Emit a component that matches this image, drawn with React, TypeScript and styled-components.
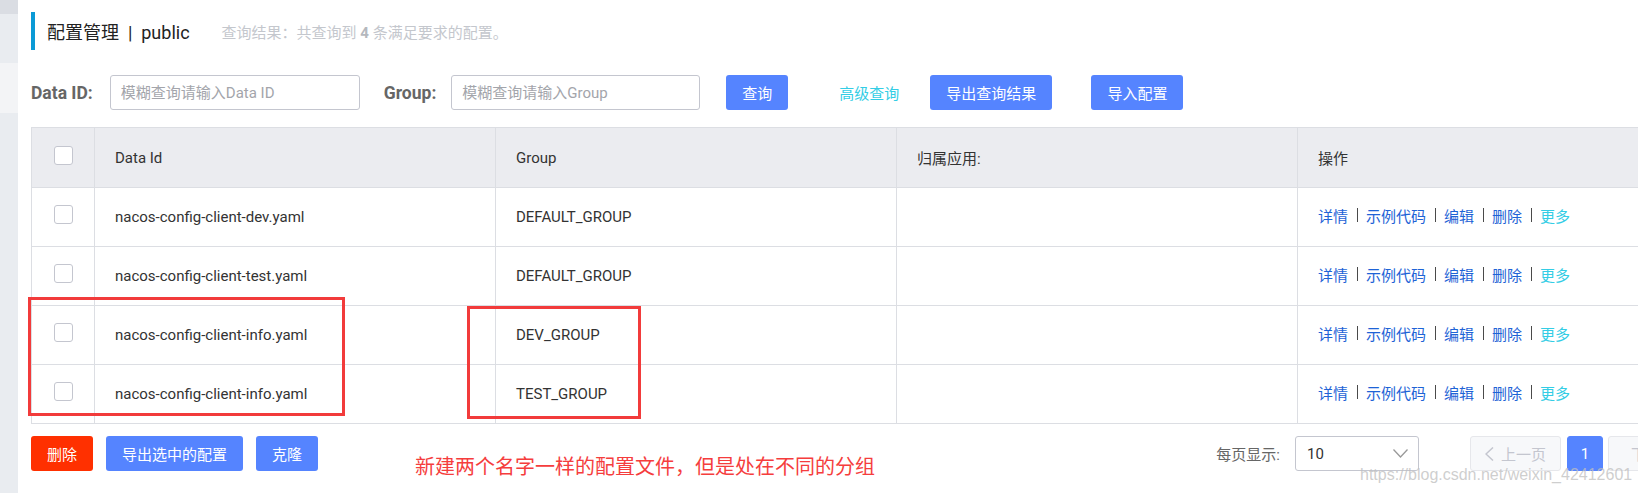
import React from 'react'
import styled, { createGlobalStyle } from 'styled-components'

const GlobalStyle = createGlobalStyle`
  html, body {
    margin: 0;
    padding: 0;
    background: #fff;
    overflow: hidden;
  }
  body {
    font-family: Roboto, "Noto Sans CJK SC", sans-serif;
    font-size: 15px;
    color: #333;
  }
  * {
    box-sizing: border-box;
  }
`

const Page = styled.div`
  position: relative;
  display: flex;
  width: 1638px;
  height: 493px;
  overflow: hidden;
`

const Sidebar = styled.div`
  flex: none;
  width: 18px;
  display: flex;
  flex-direction: column;
  background: #e9ecf0;
`

const SideBlock = styled.div<{ h: number; tone: string }>`
  height: ${({ h }) => h}px;
  background: ${({ tone }) => tone};
`

const Main = styled.div`
  flex: none;
  width: 1668px;
  margin-left: 13px;
  padding-top: 12px;
`

const TitleBar = styled.div`
  display: flex;
  align-items: center;
  height: 38px;
  border-left: 4px solid #0b9ad6;
  padding-left: 12px;
`

const Title = styled.h1`
  margin: 0;
  font-size: 18px;
  font-weight: 400;
  color: #222;
`

const Summary = styled.span`
  margin-left: 32px;
  font-size: 15px;
  color: #c4c7cd;

  strong {
    font-weight: 700;
    color: #b5b8be;
  }
`

const SearchBar = styled.div`
  display: flex;
  align-items: center;
  height: 35px;
  margin-top: 25px;
`

const FieldLabel = styled.label<{ gap?: number; space: number }>`
  margin-left: ${({ gap }) => gap || 0}px;
  margin-right: ${({ space }) => space}px;
  font-size: 17.5px;
  font-weight: 700;
  color: #666;
`

const SearchInput = styled.input<{ w: number }>`
  width: ${({ w }) => w}px;
  height: 35px;
  padding: 0 10px;
  border: 1px solid #c4c6cf;
  border-radius: 3px;
  font: inherit;
  color: #333;
  outline: none;

  &::placeholder {
    color: #a3a5ab;
  }
`

const Button = styled.button<{ gap?: number; danger?: boolean }>`
  height: 35px;
  margin-left: ${({ gap }) => gap || 0}px;
  padding: 0 16px;
  border: none;
  border-radius: 3px;
  background: ${({ danger }) => (danger ? '#ff3000' : '#5584ff')};
  color: #fff;
  font: inherit;
  cursor: pointer;
`

const TextButton = styled.button<{ gap?: number }>`
  height: 35px;
  margin-left: ${({ gap }) => gap || 0}px;
  padding: 0 16px;
  border: none;
  background: transparent;
  color: #33cde5;
  font: inherit;
`

const Table = styled.div`
  margin-top: 17px;
  border: 1px solid #dcdee3;
  border-bottom: none;
`

const Row = styled.div<{ head?: boolean }>`
  display: grid;
  grid-template-columns: 63px 401px 401px 401px 1fr;
  height: ${({ head }) => (head ? 60 : 59)}px;
  background: ${({ head }) => (head ? '#ebecf0' : '#fff')};
  border-bottom: 1px solid #dcdee3;
`

const Cell = styled.div<{ center?: boolean; lift?: number }>`
  display: flex;
  align-items: center;
  justify-content: ${({ center }) => (center ? 'center' : 'flex-start')};
  padding: ${({ center }) => (center ? 0 : '0 20px')};
  padding-bottom: ${({ lift }) => lift || 0}px;
  border-right: 1px solid #dcdee3;
  white-space: nowrap;
`

const Checkbox = styled.span`
  display: block;
  width: 19px;
  height: 19px;
  margin-bottom: 5px;
  border: 1px solid #c4c6cf;
  border-radius: 3px;
  background: #fff;
`

const OpLink = styled.a<{ more?: boolean }>`
  color: ${({ more }) => (more ? '#33cde5' : '#1e63d6')};
  text-decoration: none;
  cursor: pointer;
`

const OpSep = styled.span`
  width: 1px;
  height: 14px;
  margin: 0 8px 0 9px;
  background: #4a4a4a;
`

const Footer = styled.div`
  display: flex;
  align-items: center;
  justify-content: space-between;
  margin-top: 12px;
`

const ButtonGroup = styled.div`
  display: flex;
  gap: 13px;
`

const Pager = styled.div`
  display: flex;
  align-items: center;
`

const PagerLabel = styled.span`
  margin-right: 15px;
  color: #666;
`

const Select = styled.div`
  display: flex;
  align-items: center;
  justify-content: space-between;
  width: 124px;
  height: 35px;
  margin-right: 51px;
  padding: 0 10px 0 11px;
  border: 1px solid #c4c6cf;
  border-radius: 3px;
  color: #333;
`

const PageButton = styled.button<{ current?: boolean; wide?: boolean }>`
  display: flex;
  align-items: center;
  justify-content: center;
  gap: 7px;
  width: ${({ wide }) => (wide ? 91 : 36)}px;
  height: 35px;
  margin-left: ${({ current }) => (current ? 6 : 0)}px;
  margin-right: ${({ current }) => (current ? 5 : 0)}px;
  padding: 0;
  border: 1px solid ${({ current }) => (current ? '#5584ff' : '#e6e7eb')};
  border-radius: 3px;
  background: ${({ current }) => (current ? '#5584ff' : '#f7f8fa')};
  color: ${({ current }) => (current ? '#fff' : '#c4c6cf')};
  font: inherit;
`

const Mark = styled.div<{ x: number; y: number; w: number; h: number }>`
  position: absolute;
  left: ${({ x }) => x}px;
  top: ${({ y }) => y}px;
  width: ${({ w }) => w}px;
  height: ${({ h }) => h}px;
  border: 3px solid #f23b3b;
  pointer-events: none;
`

const Note = styled.div`
  position: absolute;
  left: 415px;
  top: 454px;
  font-size: 20px;
  line-height: 26px;
  color: #f53d3d;
  white-space: nowrap;
`

const Watermark = styled.div`
  position: absolute;
  left: 1360px;
  top: 464px;
  font-family: "Liberation Sans", sans-serif;
  font-size: 16px;
  line-height: 22px;
  color: rgba(190, 190, 190, 0.75);
  white-space: nowrap;
`

const rows = [
  { id: 'nacos-config-client-dev.yaml', group: 'DEFAULT_GROUP' },
  { id: 'nacos-config-client-test.yaml', group: 'DEFAULT_GROUP' },
  { id: 'nacos-config-client-info.yaml', group: 'DEV_GROUP' },
  { id: 'nacos-config-client-info.yaml', group: 'TEST_GROUP' },
]

const ops = ['详情', '示例代码', '编辑', '删除']

const Chevron = ({ dir }: { dir: 'down' | 'left' }) =>
  dir === 'down' ? (
    <svg width="15" height="9" viewBox="0 0 15 9" fill="none">
      <polyline points="0.5,0.5 7.5,8 14.5,0.5" stroke="#999" strokeWidth="1.3" />
    </svg>
  ) : (
    <svg width="9" height="14" viewBox="0 0 9 14" fill="none">
      <polyline points="8,0.5 1,7 8,13.5" stroke="#c4c6cf" strokeWidth="1.5" />
    </svg>
  )

export default function App() {
  return (
    <Page>
      <GlobalStyle />
      <Sidebar>
        <SideBlock h={14} tone="#dadde3" />
        <SideBlock h={49} tone="#e9ecf0" />
        <SideBlock h={50} tone="#f3f4f6" />
      </Sidebar>

      <Main>
        <TitleBar>
          <Title>配置管理&nbsp;&nbsp;|&nbsp;&nbsp;public</Title>
          <Summary>
            查询结果：共查询到 <strong>4</strong> 条满足要求的配置。
          </Summary>
        </TitleBar>

        <SearchBar>
          <FieldLabel space={17}>Data ID:</FieldLabel>
          <SearchInput w={250} placeholder="模糊查询请输入Data ID" />
          <FieldLabel gap={24} space={15}>
            Group:
          </FieldLabel>
          <SearchInput w={249} placeholder="模糊查询请输入Group" />
          <Button gap={26}>查询</Button>
          <TextButton gap={35}>高级查询</TextButton>
          <Button gap={15}>导出查询结果</Button>
          <Button gap={39}>导入配置</Button>
        </SearchBar>

        <Table>
          <Row head>
            <Cell center>
              <Checkbox />
            </Cell>
            <Cell>Data Id</Cell>
            <Cell>Group</Cell>
            <Cell>归属应用:</Cell>
            <Cell>操作</Cell>
          </Row>
          {rows.map((r, i) => (
            <Row key={i}>
              <Cell center>
                <Checkbox />
              </Cell>
              <Cell>{r.id}</Cell>
              <Cell>{r.group}</Cell>
              <Cell />
              <Cell lift={4}>
                {ops.map(op => (
                  <React.Fragment key={op}>
                    <OpLink>{op}</OpLink>
                    <OpSep />
                  </React.Fragment>
                ))}
                <OpLink more>更多</OpLink>
              </Cell>
            </Row>
          ))}
        </Table>

        <Footer>
          <ButtonGroup>
            <Button danger>删除</Button>
            <Button>导出选中的配置</Button>
            <Button>克隆</Button>
          </ButtonGroup>
          <Pager>
            <PagerLabel>每页显示:</PagerLabel>
            <Select>
              <span>10</span>
              <Chevron dir="down" />
            </Select>
            <PageButton wide>
              <Chevron dir="left" />
              上一页
            </PageButton>
            <PageButton current>1</PageButton>
            <PageButton wide>下一页</PageButton>
          </Pager>
        </Footer>
      </Main>

      <Mark x={28} y={297} w={317} h={119} />
      <Mark x={467} y={306} w={174} h={113} />
      <Note>新建两个名字一样的配置文件，但是处在不同的分组</Note>
      <Watermark>https://blog.csdn.net/weixin_42412601</Watermark>
    </Page>
  )
}
